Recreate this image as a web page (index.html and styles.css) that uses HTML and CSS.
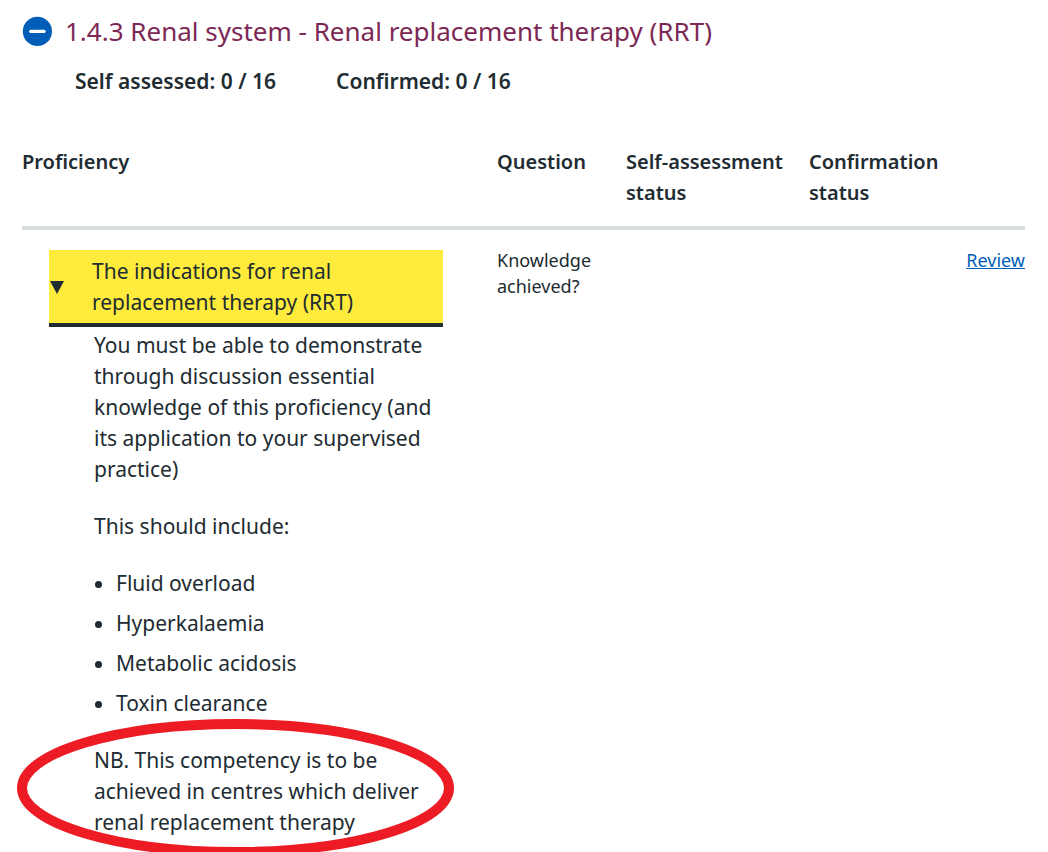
FILE: index.html
```html
<!DOCTYPE html>
<html lang="en">
<head>
<meta charset="utf-8">
<title>Renal replacement therapy</title>
<link rel="stylesheet" href="styles.css">
</head>
<body>
<main class="page">
  <h2 class="section-title">
    <button class="toggle" type="button" aria-expanded="true">
      <svg class="toggle-icon" viewBox="0 0 30 30" aria-hidden="true"><circle cx="15.4" cy="15.4" r="14.6" fill="#005eb8"/><path d="M8.8 15.4h13.2" stroke="#fff" stroke-width="3.4" stroke-linecap="round"/></svg>
      <span>1.4.3 Renal system - Renal replacement therapy (RRT)</span>
    </button>
  </h2>
  <div class="totals">
    <span>Self assessed: 0 / 16</span>
    <span>Confirmed: 0 / 16</span>
  </div>
  <table class="proficiencies">
    <colgroup><col class="col-proficiency"><col class="col-question"><col class="col-self"><col class="col-confirmation"><col></colgroup>
    <thead>
      <tr><th scope="col">Proficiency</th><th scope="col">Question</th><th scope="col">Self-assessment<br>status</th><th scope="col">Confirmation<br>status</th><td></td></tr>
    </thead>
    <tbody>
      <tr>
        <td class="proficiency">
          <details open>
            <summary class="summary">
              <svg class="arrow" viewBox="0 0 14 13" aria-hidden="true"><path d="M0 0h14L7 13z" fill="#212b32"/></svg>
              <span>The indications for renal<br>replacement therapy (RRT)</span>
            </summary>
            <div class="details-text">
              <p>You must be able to demonstrate<br>through discussion essential<br>knowledge of this proficiency (and<br>its application to your supervised<br>practice)</p>
              <p>This should include:</p>
              <ul>
                <li>Fluid overload</li>
                <li>Hyperkalaemia</li>
                <li>Metabolic acidosis</li>
                <li>Toxin clearance</li>
              </ul>
              <div class="note">
                <p>NB. This competency is to be<br>achieved in centres which deliver<br>renal replacement therapy</p>
                <svg class="ring" viewBox="0 0 437 138" aria-hidden="true"><ellipse cx="218.5" cy="69" rx="213.5" ry="64" fill="none" stroke="#ed1c24" stroke-width="10"/></svg>
              </div>
            </div>
          </details>
        </td>
        <td class="question">Knowledge<br>achieved?</td>
        <td></td>
        <td></td>
        <td class="action"><a href="#review">Review</a></td>
      </tr>
    </tbody>
  </table>
</main>
</body>
</html>
```
FILE: styles.css
```css
* { box-sizing: border-box; }
html { overflow: hidden; }
body {
  margin: 0;
  background: #fff;
  color: #212b32;
  font-family: "Noto Sans", "Open Sans", sans-serif;
  font-size: 21px;
  line-height: 31px;
}
.page { padding: 12px 23px 0 22px; }
.section-title { margin: 0; font-size: 26px; font-weight: 400; line-height: 38px; }
.toggle {
  display: flex;
  align-items: center;
  gap: 13px;
  padding: 0;
  border: 0;
  background: none;
  color: #7c2855;
  font: inherit;
  white-space: nowrap;
}
.toggle-icon { width: 30px; height: 30px; }
.totals { display: flex; gap: 60px; padding: 16px 53px 0; font-weight: 600; }
.proficiencies { width: 100%; margin-top: 49px; border-collapse: collapse; table-layout: fixed; }
.col-proficiency { width: 475px; }
.col-question { width: 129px; }
.col-self { width: 183px; }
.col-confirmation { width: 140px; }
th, td { padding: 0; text-align: left; vertical-align: top; white-space: nowrap; }
th { padding-bottom: 18px; font-size: 20px; font-weight: 600; }
thead tr { border-bottom: 4px solid #d8dde0; }
.proficiency { padding: 20px 54px 0 27px; }
.summary {
  display: flex;
  align-items: center;
  gap: 28px;
  padding: 6px 0 5px 1px;
  border-bottom: 4px solid #212b32;
  background: #ffeb3b;
  list-style: none;
}
.arrow { width: 14px; height: 13px; }
.details-text { padding: 3px 0 0 45px; }
.details-text p { margin: 0 0 26px; }
.details-text ul { margin: 0 0 26px; padding-left: 22px; }
.details-text li { margin-bottom: 9px; }
.note { position: relative; }
.ring { position: absolute; left: -77px; top: -26px; width: 437px; height: 138px; }
.question, .action { padding-top: 17px; font-size: 18px; line-height: 26px; }
.action { text-align: right; }
a { color: #005eb8; }
```
